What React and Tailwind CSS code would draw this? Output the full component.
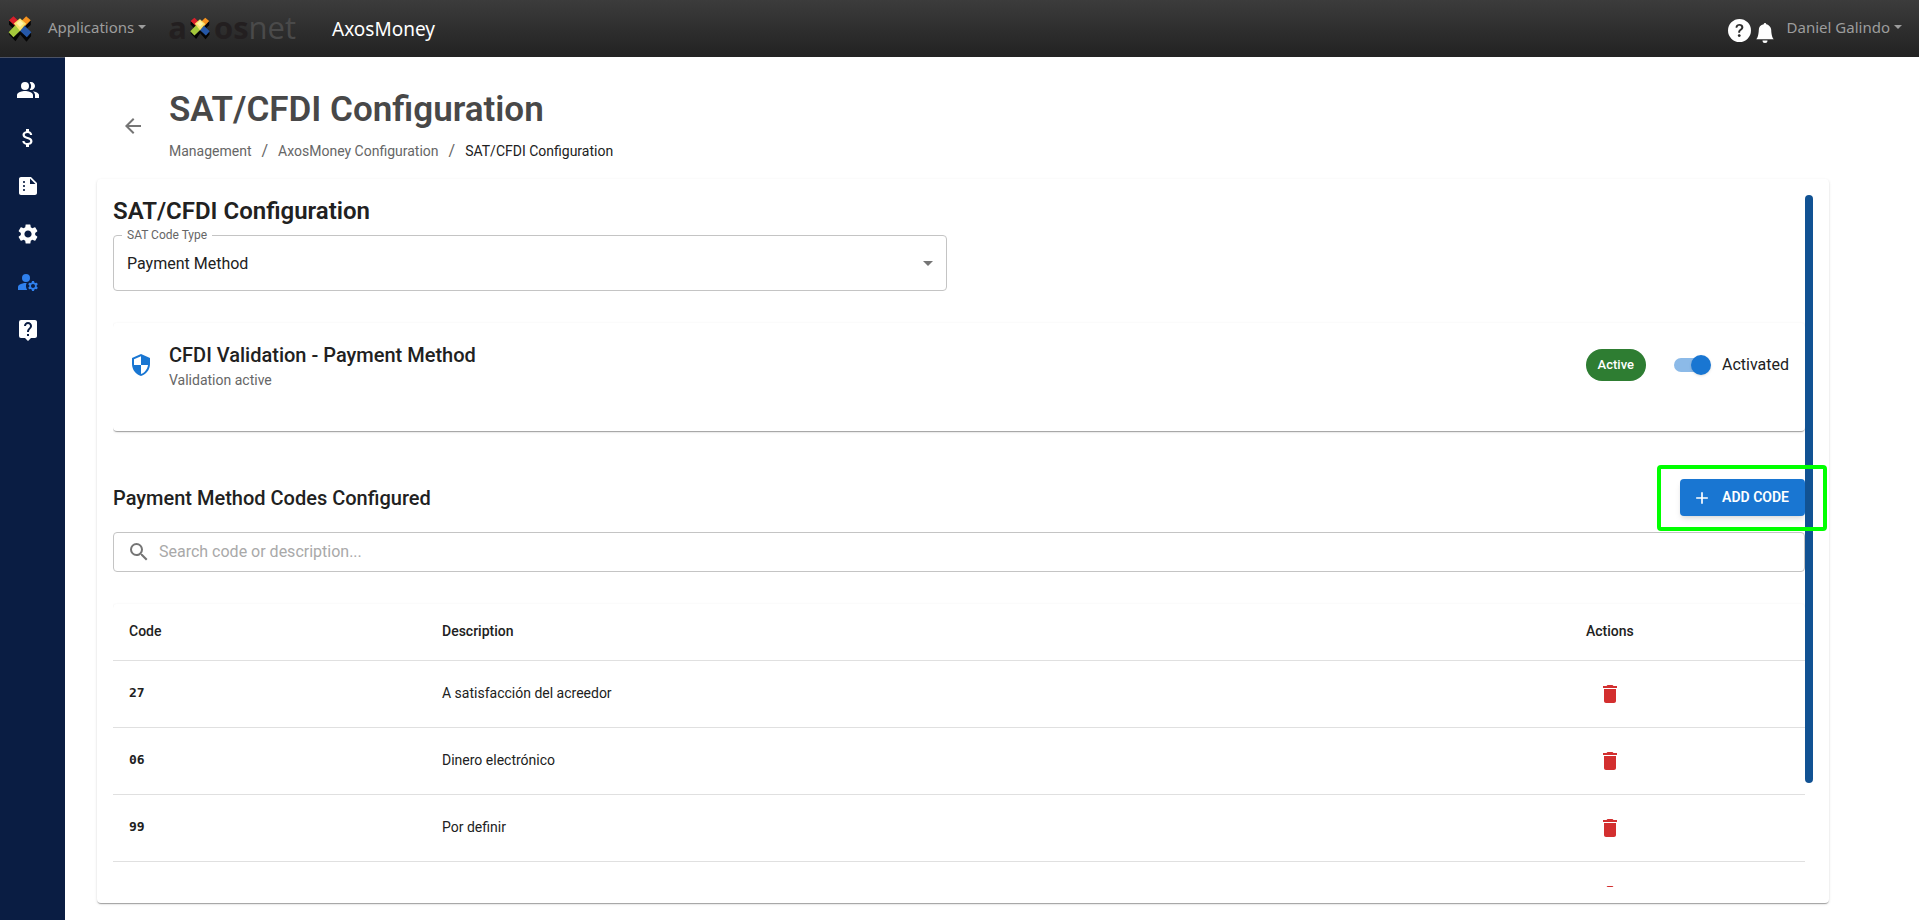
import { useState } from "react";
import {
  MdPeopleAlt,
  MdAttachMoney,
  MdSummarize,
  MdSettings,
  MdManageAccounts,
  MdLiveHelp,
  MdSecurity,
  MdDelete,
  MdAdd,
  MdSearch,
  MdArrowBack,
  MdArrowDropDown,
} from "react-icons/md";
import { BsQuestionCircleFill, BsBellFill } from "react-icons/bs";

const NAV = [
  { label: "Users", Icon: MdPeopleAlt },
  { label: "Payments", Icon: MdAttachMoney },
  { label: "Reports", Icon: MdSummarize },
  { label: "Settings", Icon: MdSettings },
  { label: "Management", Icon: MdManageAccounts, active: true },
  { label: "Help", Icon: MdLiveHelp },
];

const ROWS = [
  { code: "27", description: "A satisfacción del acreedor" },
  { code: "06", description: "Dinero electrónico" },
  { code: "99", description: "Por definir" },
  { code: "", description: "" },
];

const PAPER =
  "rounded bg-white shadow-[0_2px_1px_-1px_rgba(0,0,0,0.2),0_1px_1px_0_rgba(0,0,0,0.14),0_1px_3px_0_rgba(0,0,0,0.12)]";

function LogoMark({ className }) {
  return (
    <svg viewBox="0 0 72 80" className={className} aria-hidden="true">
      <g fill="#050505">
        <path d="M3 13L2 26L14 38L22 30Z" />
        <path d="M69 14L69 28L58 38L50 30Z" />
        <path d="M2 50L3 58L22 78L36 58L36 46L16 64Z" />
        <path d="M36 46L36 56L56 79L70 62L70 50L57 64Z" />
      </g>
      <path d="M2 13L16 1L34 18L20 30Z" fill="#d91f2a" />
      <path d="M39 17L55 1L69 13L52 31Z" fill="#f7931e" />
      <path d="M1 50L22 28L38 44L16 65Z" fill="#a5c83b" />
      <path d="M36 45L50 30L71 50L57 65Z" fill="#2557a7" />
      <path d="M17 23L36 7L55 24L36 46Z" fill="#fbe36b" />
      <path d="M25 22L36 13L47 23L36 34Z" fill="#fff3a6" />
    </svg>
  );
}

function Caret() {
  return (
    <span className="inline-block border-x-4 border-t-4 border-x-transparent border-t-current" />
  );
}

function Header() {
  return (
    <header className="flex h-[57px] shrink-0 items-center bg-linear-to-b from-[#3c3c3c] to-[#222222] pr-[17px] pl-2 font-['Noto_Sans',sans-serif] text-[#9d9d9d]">
      <LogoMark className="h-[26px] w-6" />
      <button type="button" className="ml-4 flex items-center gap-1 pb-1 text-[15px] leading-5">
        Applications
        <Caret />
      </button>
      <a
        href="#home"
        aria-label="axosnet"
        className="ml-[22px] flex items-center pb-1 font-['Open_Sans',sans-serif] text-[31px] leading-8"
      >
        <span className="font-bold text-[#231f20]">a</span>
        <LogoMark className="mr-1 ml-[3px] mt-1 h-[23px] w-5" />
        <span className="font-bold text-[#231f20]">os</span>
        <span className="text-[#4a4a4a]">net</span>
      </a>
      <a href="#axosmoney" className="ml-9 text-[19px] leading-7 text-white">
        AxosMoney
      </a>
      <div className="ml-auto flex items-center">
        <button type="button" aria-label="Help" className="mt-1 text-white">
          <BsQuestionCircleFill className="size-[23px]" />
        </button>
        <button type="button" aria-label="Notifications" className="mt-2 ml-1 text-white">
          <BsBellFill className="size-5" />
        </button>
        <button type="button" className="ml-3 flex items-center gap-1 pb-1 text-[15px] leading-5">
          Daniel Galindo
          <Caret />
        </button>
      </div>
    </header>
  );
}

function Sidebar() {
  return (
    <nav
      aria-label="Main"
      className="flex w-[65px] shrink-0 flex-col items-center gap-6 border-t border-[#4b5266] bg-[#0a1d43] pt-5 pr-[10px]"
    >
      {NAV.map(({ label, Icon, active }) => (
        <a
          key={label}
          href={"#" + label.toLowerCase()}
          aria-label={label}
          className={active ? "text-[#2f80ed]" : "text-white"}
        >
          <Icon className="size-6" />
        </a>
      ))}
    </nav>
  );
}

function PageTitle() {
  return (
    <div className="flex items-center pl-6">
      <button type="button" aria-label="Back" className="mr-6 text-[#757575]">
        <MdArrowBack className="size-6" />
      </button>
      <div>
        <h1 className="text-[35px] leading-[42px] font-semibold text-[#484848]">
          SAT/CFDI Configuration
        </h1>
        <nav
          aria-label="Breadcrumb"
          className="mt-2 flex gap-[10px] text-sm leading-6 text-[#666666]"
        >
          <a href="#management">Management</a>
          <span className="text-base">/</span>
          <a href="#configuration">AxosMoney Configuration</a>
          <span className="text-base">/</span>
          <span className="text-[#212121]">SAT/CFDI Configuration</span>
        </nav>
      </div>
    </div>
  );
}

function CodeTypeSelect() {
  return (
    <div className="relative">
      <label
        htmlFor="code-type"
        className="absolute -top-2 left-[9px] bg-white px-[5px] text-xs leading-4 text-[#666666]"
      >
        SAT Code Type
      </label>
      <select
        id="code-type"
        className="h-14 w-full appearance-none rounded border border-[#c4c4c4] bg-white px-[13px] pt-0.5 text-base text-[#212121]"
      >
        <option>Payment Method</option>
      </select>
      <MdArrowDropDown className="pointer-events-none absolute top-4 right-[7px] size-6 text-[#757575]" />
    </div>
  );
}

function ValidationPanel() {
  const [on, setOn] = useState(true);
  return (
    <section className={`${PAPER} mt-8 flex h-[108px] items-start p-4`}>
      <MdSecurity className="mt-[14px] size-6 text-[#1976d2]" />
      <div className="ml-4">
        <h3 className="text-xl leading-8 font-medium">CFDI Validation - Payment Method</h3>
        <p className="text-sm leading-[18px] text-[#666666]">Validation active</p>
      </div>
      <span className="mt-[10px] ml-auto flex h-8 items-center rounded-full bg-[#2e7d32] px-3 text-[13px] font-medium text-white">
        Active
      </span>
      <label className="mt-[14px] ml-7 flex items-center text-base leading-6">
        <span className="relative flex h-5 w-9 items-center">
          <input
            type="checkbox"
            role="switch"
            checked={on}
            onChange={(e) => setOn(e.target.checked)}
            className="peer h-[14px] w-[34px] appearance-none rounded-full bg-[#8cbae8]"
          />
          <span className="pointer-events-none absolute right-[-1px] size-5 rounded-full bg-[#1976d2] shadow" />
        </span>
        <span className="ml-3">Activated</span>
      </label>
    </section>
  );
}

function CodesTable() {
  return (
    <div className={`${PAPER} mt-8`}>
      <table className="w-full table-fixed text-left text-sm text-[#212121]">
        <colgroup>
          <col className="w-[313px]" />
          <col />
          <col className="w-[235px]" />
        </colgroup>
        <thead>
          <tr className="h-14 border-b border-[#e0e0e0]">
            <th className="px-4 pb-0.5 font-medium">Code</th>
            <th className="px-4 pb-0.5 font-medium">Description</th>
            <th className="px-4 pb-0.5 font-medium">Actions</th>
          </tr>
        </thead>
        <tbody>
          {ROWS.map((row, i) => (
            <tr key={i} className="h-[67px] border-b border-[#e0e0e0]">
              <td className="px-4 font-['DejaVu_Sans_Mono',monospace] text-[13px] font-bold">
                {row.code}
              </td>
              <td className="px-4 pb-0.5">{row.description}</td>
              <td className="px-4">
                <button
                  type="button"
                  aria-label={"Delete " + row.code}
                  className="flex px-3 text-[#d32f2f]"
                >
                  <MdDelete className="size-6" />
                </button>
              </td>
            </tr>
          ))}
        </tbody>
      </table>
    </div>
  );
}

export default function App() {
  return (
    <div className="flex h-screen flex-col overflow-hidden bg-white font-[Roboto,sans-serif] text-[#212121]">
      <Header />
      <div className="flex min-h-0 flex-1">
        <Sidebar />
        <main className="flex min-w-0 flex-1 flex-col pt-8 pr-[90px] pb-[17px] pl-8">
          <PageTitle />
          <div className={`${PAPER} mt-4 flex min-h-0 flex-1 p-4`}>
            <div className="min-w-0 flex-1 overflow-hidden">
              <h2 className="mb-2 text-2xl leading-8 font-semibold">SAT/CFDI Configuration</h2>
              <div className="grid grid-cols-2 gap-6">
                <CodeTypeSelect />
              </div>
              <ValidationPanel />
              <div className="mt-12 flex items-center justify-between">
                <h3 className="text-xl leading-8 font-medium">Payment Method Codes Configured</h3>
                <button
                  type="button"
                  className="flex h-[37px] items-center gap-[10px] rounded bg-[#1976d2] pr-4 pl-3 text-sm font-semibold text-white shadow-md"
                >
                  <MdAdd className="size-5" />
                  <span className="pb-0.5">ADD CODE</span>
                </button>
              </div>
              <div className="mt-4 flex h-10 items-center rounded border border-[#c4c4c4] px-[13px] text-[#757575]">
                <MdSearch className="size-6" />
                <input
                  type="text"
                  aria-label="Search code or description"
                  placeholder="Search code or description..."
                  className="ml-2 min-w-0 flex-1 text-base text-[#212121] outline-none placeholder:text-[#a9a9a9]"
                />
              </div>
              <CodesTable />
            </div>
            <div className="relative w-2 shrink-0">
              <div className="h-[85%] rounded-full bg-[#115293]" />
              <div className="pointer-events-none absolute top-[270px] right-[-14px] h-[66px] w-[170px] rounded-sm border-4 border-[#00ff00]" />
            </div>
          </div>
        </main>
      </div>
    </div>
  );
}
